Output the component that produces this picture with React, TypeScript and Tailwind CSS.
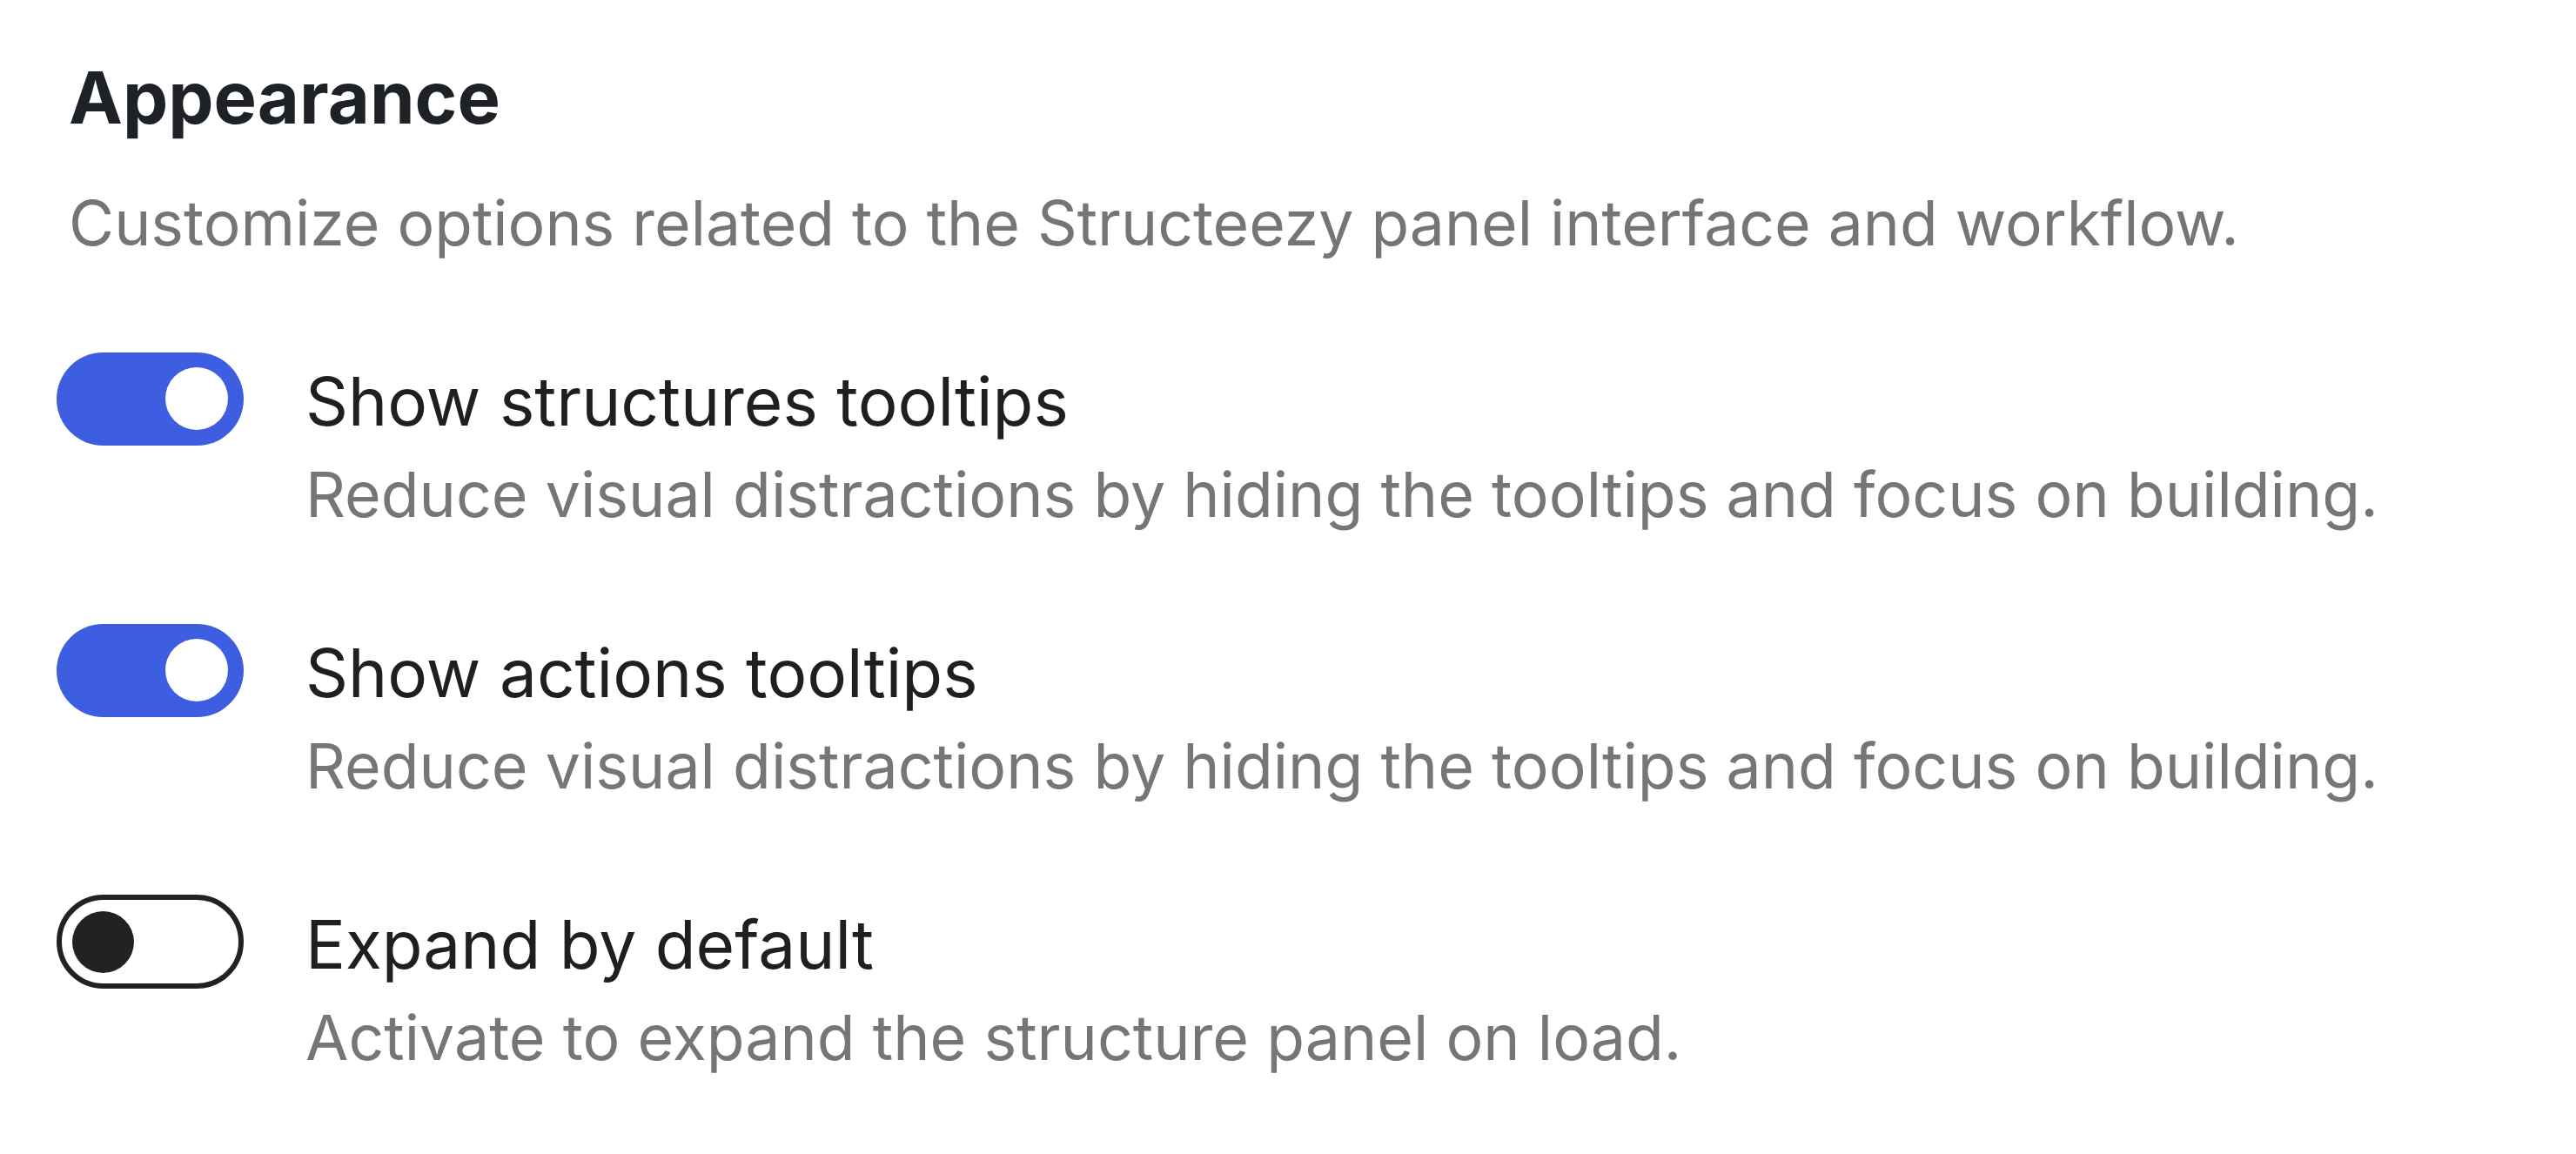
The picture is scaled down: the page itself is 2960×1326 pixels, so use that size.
const settings = [
  {
    title: "Show structures tooltips",
    desc: "Reduce visual distractions by hiding the tooltips and focus on building.",
    on: true,
  },
  {
    title: "Show actions tooltips",
    desc: "Reduce visual distractions by hiding the tooltips and focus on building.",
    on: true,
  },
  {
    title: "Expand by default",
    desc: "Activate to expand the structure panel on load.",
    on: false,
  },
];

function Toggle({ on }: { on: boolean }) {
  if (on) {
    return (
      <div className="w-[215px] h-[107px] rounded-full bg-[#3d5ee1] flex items-center justify-end pr-[18px] shrink-0">
        <div className="w-[72px] h-[72px] rounded-full bg-white" />
      </div>
    );
  }
  return (
    <div className="w-[215px] h-[108px] rounded-full border-[6px] border-[#222222] bg-white flex items-center justify-start pl-[12px] shrink-0">
      <div className="w-[71px] h-[71px] rounded-full bg-[#222222]" />
    </div>
  );
}

export default function App() {
  return (
    <div className="min-h-screen bg-white pl-[79px] pt-[62px] font-['Inter',sans-serif]">
      <h1 className="text-[83px] leading-[100px] font-bold text-[#1e2226]">Appearance</h1>
      <p className="mt-[48px] text-[71.4px] leading-[92px] text-[#757575]">
        Customize options related to the Structeezy panel interface and workflow.
      </p>

      <div className="mt-[111px] -ml-[14px] flex flex-col gap-[113px]">
        {settings.map((s) => (
          <div key={s.title} className="flex items-start gap-[71px]">
            <div className="h-[96px] flex items-center -mt-[3px]">
              <Toggle on={s.on} />
            </div>
            <div className="flex flex-col gap-[15px]">
              <span className="text-[76.5px] leading-[96px] text-[#1f1f1f]">{s.title}</span>
              <span className="text-[71.6px] leading-[88px] text-[#767676]">{s.desc}</span>
            </div>
          </div>
        ))}
      </div>
    </div>
  );
}
